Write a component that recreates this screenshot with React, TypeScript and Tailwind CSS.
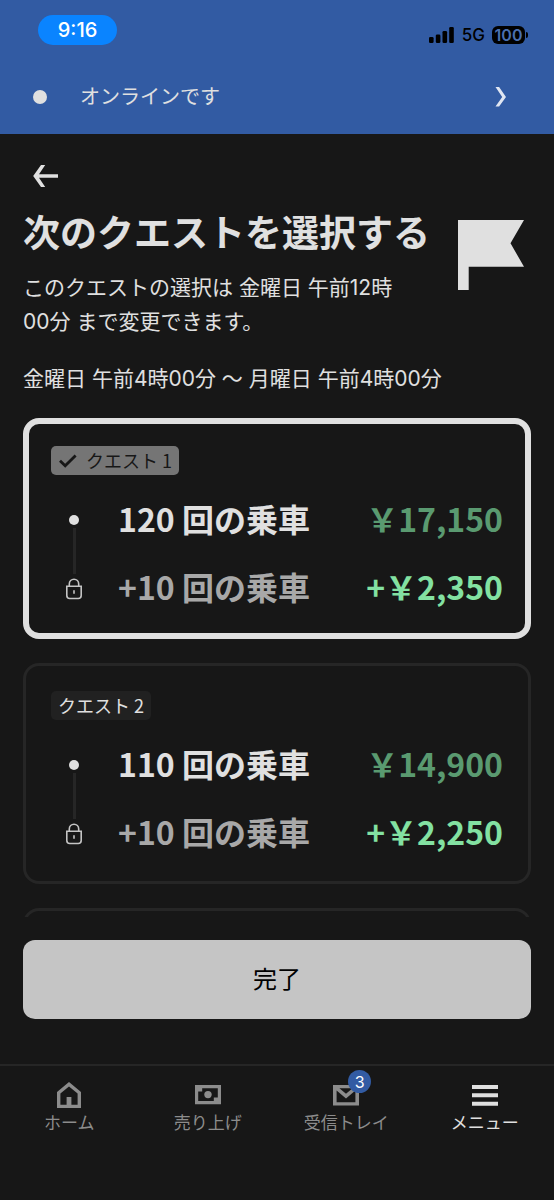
import React, { useState } from 'react'

interface Quest {
  id: number
  rides: number
  reward: string
  extraReward: string
}

const quests: Quest[] = [
  { id: 1, rides: 120, reward: '17,150', extraReward: '2,350' },
  { id: 2, rides: 110, reward: '14,900', extraReward: '2,250' },
]

const SignalIcon = () => (
  <svg width="25" height="16" viewBox="0 0 25 16" fill="black" aria-hidden="true">
    <rect x="0" y="10" width="4.6" height="6" rx="1.3" />
    <rect x="6.8" y="7.4" width="4.6" height="8.6" rx="1.3" />
    <rect x="13.5" y="4" width="4.6" height="12" rx="1.3" />
    <rect x="20.2" y="0" width="4.6" height="16" rx="1.3" />
  </svg>
)

const LockIcon = () => (
  <svg width="16" height="22" viewBox="0 0 16 22" fill="none" stroke="#c4c4c4" strokeWidth="1.6" aria-hidden="true">
    <path d="M3.3 8V6a4.7 4.7 0 0 1 9.4 0v2" />
    <path d="M.8 8.2h14.4v9.3a3 3 0 0 1-3 3H3.8a3 3 0 0 1-3-3z" />
    <path d="M8 12.3v3.4" />
  </svg>
)

const FlagIcon = () => (
  <svg width="66" height="70" viewBox="0 0 66 70" fill="#e0e0e0" className="mt-[11px] shrink-0" aria-hidden="true">
    <path d="M0 0h66L52.5 23.3 66 46.7H10.7V70H0z" />
  </svg>
)

const HomeIcon = () => (
  <svg width="26" height="26" viewBox="0 0 26 26" fill="currentColor" aria-hidden="true">
    <path fillRule="evenodd" d="M13 0l12 10v16H1V10zM4.4 11.6V22.8h6.2V15h4.8v7.8h6.2V11.6L13 4.4z" />
  </svg>
)

const MoneyIcon = () => (
  <svg width="26" height="26" viewBox="0 0 26 26" fill="currentColor" aria-hidden="true">
    <path fillRule="evenodd" d="M0 3h26v19.3H0zM7.2 6.2v3.4H3.2v9.4h15.6v-3.4h4V6.2z" />
    <circle cx="13" cy="12.6" r="3.7" />
  </svg>
)

const MailIcon = () => (
  <svg width="26" height="26" viewBox="0 0 26 26" fill="currentColor" aria-hidden="true">
    <path fillRule="evenodd" d="M0 3h26v20.5H0zM6.4 6.2l6.6 5.6 6.6-5.6zM3.6 8.6v11.6h18.8V8.6L13 16.6z" />
  </svg>
)

const MenuIcon = () => (
  <svg width="26" height="26" viewBox="0 0 26 26" fill="currentColor" aria-hidden="true">
    <path d="M0 3h26v4H0zM0 11.3h26v4H0zM0 19.7h26v4H0z" />
  </svg>
)

const navItems = [
  { label: 'ホーム', icon: <HomeIcon /> },
  { label: '売り上げ', icon: <MoneyIcon /> },
  { label: '受信トレイ', icon: <MailIcon />, badge: 3 },
  { label: 'メニュー', icon: <MenuIcon />, active: true },
]

interface CardProps {
  quest: Quest
  selected: boolean
  onSelect: () => void
}

const QuestCard = ({ quest, selected, onSelect }: CardProps) => {
  return (
    <label
      className={`relative block cursor-pointer rounded-2xl font-['Noto_Sans_CJK_JP',sans-serif] ${
        selected ? 'border-6 border-[#e0e0e0] px-[22px] pt-[22px] pb-[13px]' : 'border-3 border-[#262626] px-[25px] pt-[25px] pb-4'
      }`}
    >
      <input type="radio" name="quest" className="sr-only" checked={selected} onChange={onSelect} />
      <span
        className={`flex h-[29px] w-fit items-center rounded-[5px] px-[7px] text-lg leading-[29px] ${
          selected ? 'bg-[#757575] text-[#171717]' : 'bg-[#212121] text-[#e0e0e0]'
        }`}
      >
        {selected && (
          <svg width="20" height="14" viewBox="0 0 20 14" fill="none" stroke="#171717" strokeWidth="2.8" className="mr-2" aria-hidden="true">
            <path d="M2 6.8l5.2 5L17.6 1.4" />
          </svg>
        )}
        クエスト {quest.id}
      </span>

      <div className="mt-[9px] flex">
        <div className="mr-[21px] flex w-[46px] flex-col items-center pt-[31px]">
          <span className="size-[10px] rounded-full bg-[#e0e0e0]" />
          <span className="mt-[3px] mb-1 h-[46px] w-[3px] bg-[#262626]" />
          <LockIcon />
        </div>
        <div className="flex-1 text-[32px] leading-[68px] font-semibold whitespace-nowrap">
          <div className="flex justify-between">
            <span className="text-[#e0e0e0]">{quest.rides} 回の乗車</span>
            <span className="text-[#5a9a70]">￥{quest.reward}</span>
          </div>
          <div className="flex justify-between">
            <span className="text-[#a8a8a8]">+10 回の乗車</span>
            <span className="text-[#83e1a2]">+￥{quest.extraReward}</span>
          </div>
        </div>
      </div>
    </label>
  )
}

const App = () => {
  const [selected, setSelected] = useState(1)

  return (
    <div lang="ja" className="flex h-screen flex-col bg-[#171717] font-[Inter,'Noto_Sans_CJK_JP',sans-serif] text-[#e0e0e0]">
      <header className="bg-[#325ba3] pt-[15px]">
        <div className="flex items-end justify-between pr-[26px] pl-[38px]">
          <span className="flex h-[30px] w-[79px] items-center justify-center rounded-full bg-[#0a84ff] text-xl font-medium text-white">
            9:16
          </span>
          <div className="flex h-5 items-center text-black">
            <SignalIcon />
            <span className="ml-2 text-[17px] leading-5 font-medium">5G</span>
            <span className="ml-[7px] flex h-[18px] w-[33px] items-center justify-center rounded-md bg-black text-base font-semibold text-[#4a6fb0]">
              100
            </span>
            <span className="ml-px h-[6px] w-[2px] rounded-r bg-black" />
          </div>
        </div>
        <button type="button" className="mt-[15px] flex h-[74px] w-full items-center pr-12 pl-[33px] text-left">
          <span className="mr-[33px] size-[14px] rounded-full bg-[#e0e0e0]" />
          <span className="flex-1 text-xl">オンラインです</span>
          <svg width="11" height="20" viewBox="0 0 11 20" fill="#e0e6f2" aria-hidden="true">
            <path d="M.5 0h3.6L11 9.9 4.1 19.6H.5L7.2 9.9z" />
          </svg>
        </button>
      </header>

      <main className="min-h-0 flex-1 overflow-hidden px-[23px] pt-[31px]">
        <button type="button" aria-label="戻る" className="ml-[10px] block">
          <svg width="25" height="22" viewBox="0 0 25 22" fill="#e0e0e0" aria-hidden="true">
            <path d="M8 0h4.2L6 9.3H25v3.4H6l6.2 9.3H8L.2 11z" />
          </svg>
        </button>

        <div className="mt-[22px] flex justify-between pr-[7px]">
          <div>
            <h1 className="text-[37px] leading-[50px] font-bold whitespace-nowrap">次のクエストを選択する</h1>
            <p className="mt-3 w-[392px] text-[21px] leading-[34px]">
              このクエストの選択は 金曜日 午前12時00分 まで変更できます。
            </p>
          </div>
          <FlagIcon />
        </div>
        <p className="mt-[23px] text-[21px] leading-[34px]">金曜日 午前4時00分 〜 月曜日 午前4時00分</p>

        <div className="mt-[22px] flex flex-col gap-6">
          {quests.map((quest) => (
            <QuestCard key={quest.id} quest={quest} selected={selected === quest.id} onSelect={() => setSelected(quest.id)} />
          ))}
          {/* next card peeks out above the footer */}
          <div className="h-24 rounded-2xl border-3 border-[#262626]" />
        </div>
      </main>

      <footer>
        <div className="px-[23px] pt-[23px] pb-[45px]">
          <button type="button" className="h-[79px] w-full rounded-xl bg-[#c5c5c5] text-2xl text-black">
            完了
          </button>
        </div>
        <nav className="grid grid-cols-4 border-t-2 border-[#262626] pt-4 pb-[67px]">
          {navItems.map((item) => (
            <a
              key={item.label}
              href="#"
              className={`flex flex-col items-center ${item.active ? 'text-[#e0e0e0]' : 'text-[#8c8c8c]'}`}
            >
              <span className="relative">
                {item.icon}
                {item.badge && (
                  <span className="absolute -top-3 -right-3 flex size-[23px] items-center justify-center rounded-full bg-[#325ba3] text-base text-white">
                    {item.badge}
                  </span>
                )}
              </span>
              <span className="mt-[5px] text-[17px] leading-5">{item.label}</span>
            </a>
          ))}
        </nav>
      </footer>
    </div>
  )
}

export default App
